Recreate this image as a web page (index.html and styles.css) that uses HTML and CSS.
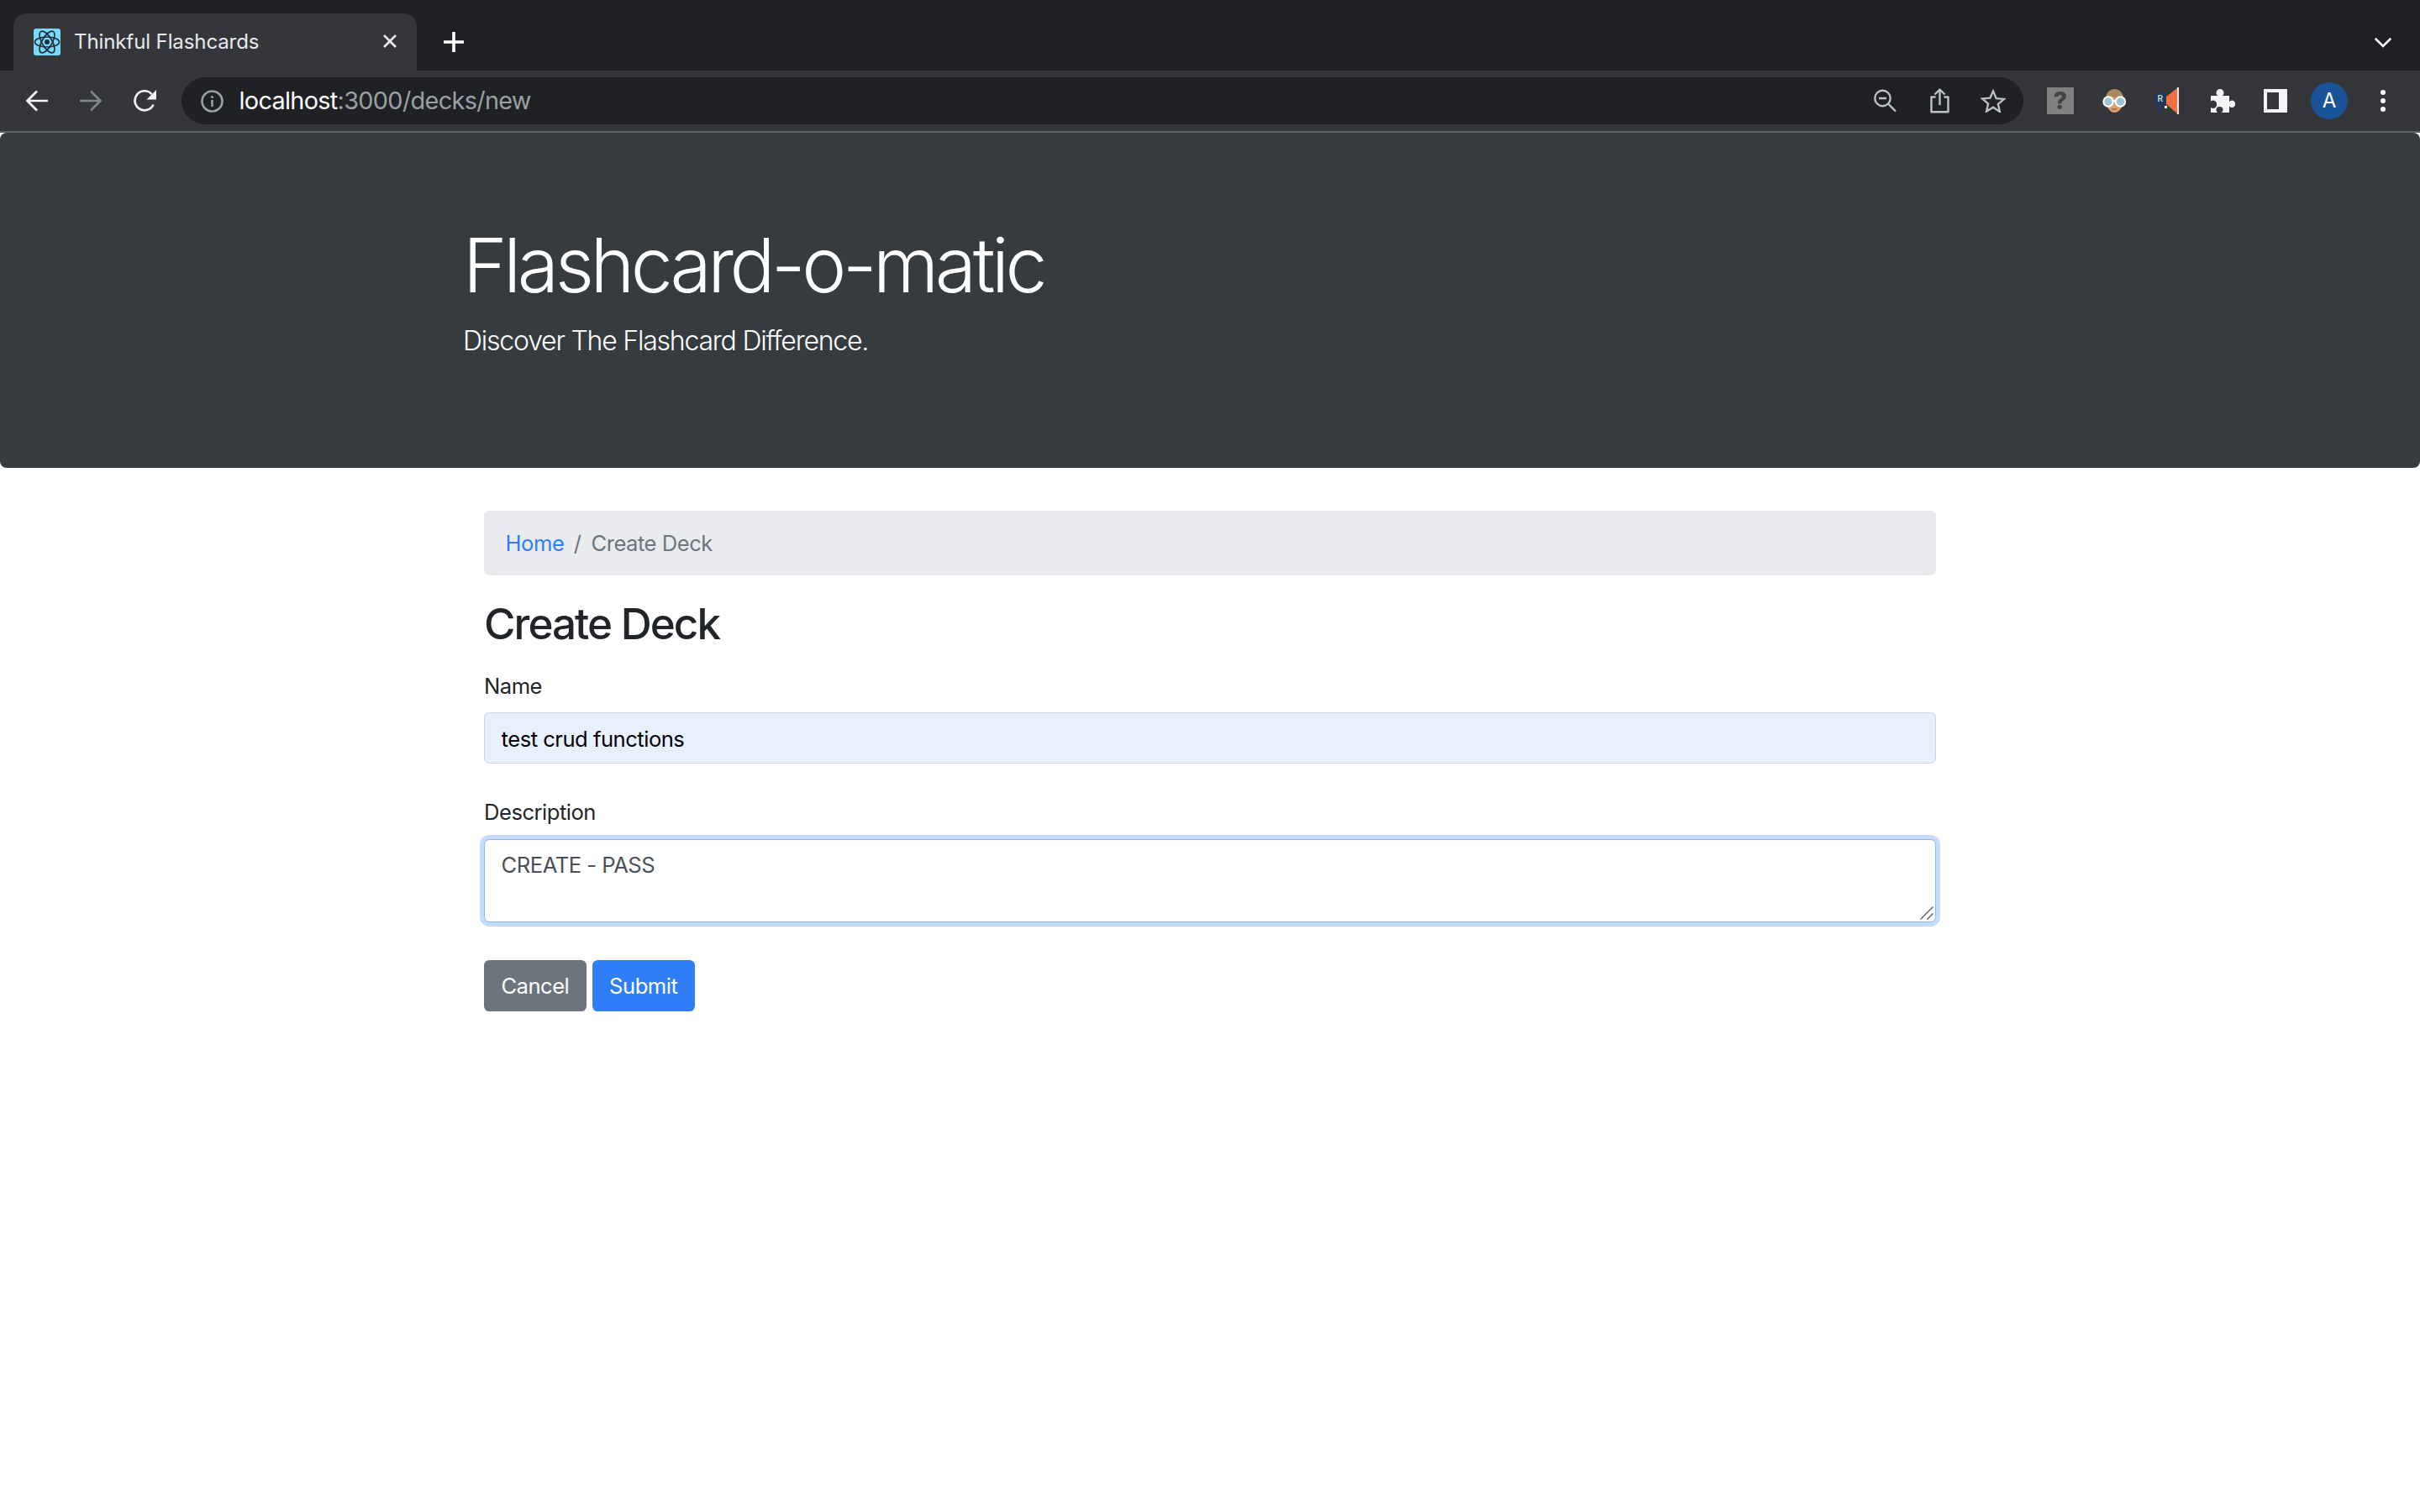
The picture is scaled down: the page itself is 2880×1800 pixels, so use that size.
FILE: index.html
```html
<!DOCTYPE html>
<html lang="en">
<head>
<meta charset="utf-8">
<title>Thinkful Flashcards</title>
<link rel="stylesheet" href="styles.css">
</head>
<body>
<header class="chrome">
  <div class="tabstrip">
    <div class="tab">
      <svg class="favicon" viewBox="0 0 32 32"><rect width="32" height="32" rx="3" fill="#7bd8fb"/><g fill="none" stroke="#20303a" stroke-width="1.7"><ellipse cx="16" cy="16" rx="14.5" ry="6"/><ellipse cx="16" cy="16" rx="14.5" ry="6" transform="rotate(60 16 16)"/><ellipse cx="16" cy="16" rx="14.5" ry="6" transform="rotate(120 16 16)"/></g><circle cx="16" cy="16" r="3" fill="#20303a"/></svg>
      <span class="tab-title">Thinkful Flashcards</span>
      <svg class="tab-close" viewBox="0 0 18 16"><path d="M2 1l14 14M16 1L2 15" stroke="#e8eaed" stroke-width="2.6" fill="none"/></svg>
    </div>
    <svg class="new-tab" viewBox="0 0 24 24"><path d="M12 0v24M0 12h24" stroke="#fff" stroke-width="3.6" stroke-linecap="round" fill="none"/></svg>
    <svg class="tab-menu" viewBox="0 0 20 12"><path d="M1.5 1.5L10 10l8.500-8.500" stroke="#fff" stroke-width="2.600" fill="none" stroke-linecap="round"/></svg>
  </div>
  <div class="toolbar">
    <svg class="nav-icon" viewBox="0 0 26 26"><path d="M26 13H2M13 1.500L1.500 13 13 24.500" stroke="#f1f3f4" stroke-width="2.700" fill="none"/></svg>
    <svg class="nav-icon dim" viewBox="0 0 26 26"><path d="M0 13h24M13 1.500L24.500 13 13 24.500" stroke="#80868b" stroke-width="2.700" fill="none"/></svg>
    <svg class="nav-icon" viewBox="0 0 27 27"><path d="M23.500 17.500A11.500 11.500 0 1 1 21.500 5" stroke="#f1f3f4" stroke-width="2.700" fill="none"/><path d="M27 0v11.500H15.500z" fill="#f1f3f4"/></svg>
    <div class="omnibox">
      <svg class="info" viewBox="0 0 27 27"><circle cx="13.500" cy="13.500" r="12" stroke="#9aa0a6" stroke-width="2.600" fill="none"/><path d="M13.500 12v8" stroke="#9aa0a6" stroke-width="2.600"/><circle cx="13.500" cy="8.500" r="1.600" fill="#9aa0a6"/></svg>
      <span class="url"><span class="url-host">localhost</span>:3000/decks/new</span>
      <div class="omni-actions">
        <svg class="omni-icon" viewBox="0 0 27 27"><circle cx="10.500" cy="10.500" r="9.200" stroke="#bdc1c6" stroke-width="2.400" fill="none"/><path d="M6 10.500h9M17 17l9 9" stroke="#bdc1c6" stroke-width="2.400" fill="none"/></svg>
        <svg class="omni-icon share" viewBox="0 0 27 30"><path d="M8.500 10.500H3.500v17.800h20V10.500h-5M13.500 20V2M7.500 7.500l6-6 6 6" stroke="#bdc1c6" stroke-width="2.400" fill="none" stroke-linejoin="round"/></svg>
        <svg class="omni-icon star" viewBox="0 0 30 29"><path d="M15 2.500l3.800 9 9.700.800-7.400 6.300 2.200 9.500L15 22.500l-8.300 5.100 2.200-9.500-7.400-6.300 9.700-.8z" stroke="#bdc1c6" stroke-width="2.400" fill="none"/></svg>
      </div>
    </div>
    <div class="ext-icons">
      <div class="ext-help"><span class="ext-help-mark">?</span></div>
      <svg class="ext" viewBox="0 0 30 30"><path d="M5 13C5 5 10 1 15.500 1S26 5 26 13v4H5z" fill="#a88a62"/><path d="M6 14c2-2 4-3 6-5 3 3 8 4 13 4v5c0 6-5 11-9.500 11S6 24 6 18z" fill="#d9a273"/><circle cx="8" cy="16" r="5.700" fill="#9cc3cf" stroke="#fff" stroke-width="2"/><circle cx="22.500" cy="16" r="5.700" fill="#9cc3cf" stroke="#fff" stroke-width="2"/><path d="M13 15h4" stroke="#fff" stroke-width="2"/><path d="M12 25h6" stroke="#a8623f" stroke-width="1.500"/></svg>
      <svg class="ext megaphone" viewBox="0 0 30 32"><path d="M0 12c0-4 3-6 6-6h8v15H9l-1 9H5l-.5-9C2 20 0 17 0 13z" fill="#1f3a5c"/><path d="M14 11l13-10v30L14 20z" fill="#f27141"/><path d="M28 0v32" stroke="#e8eef2" stroke-width="2"/><path d="M12 22h3v3h-3z" fill="#fff"/><text x="3.500" y="17" class="ext-r">R</text></svg>
      <svg class="ext puzzle" viewBox="0 0 30 28"><path d="M1 8h8c-1-1-1.500-2-1.500-3.500a4.500 4.500 0 0 1 9 0C16.500 6 16 7 15 8h8v7c1-1 2-1.500 3-1.500a4 4 0 0 1 0 8.500c-1 0-2-.5-3-1.500V28H14c1-1 1.500-2 1.500-3a4 4 0 0 0-8 0c0 1 .5 2 1.500 3H1v-6c1 .5 2 1 3 1a4.800 4.800 0 0 0 0-9.500c-1 0-2 .5-3 1z" fill="#f1f3f4"/></svg>
      <svg class="ext panel" viewBox="0 0 28 28"><path d="M0 0h28v28H0z" fill="#f1f3f4"/><path d="M4 4h14v20H4z" fill="#35363a"/></svg>
      <div class="avatar">A</div>
      <svg class="kebab" viewBox="0 0 8 28"><circle cx="4" cy="4" r="3" fill="#f1f3f4"/><circle cx="4" cy="14" r="3" fill="#f1f3f4"/><circle cx="4" cy="24" r="3" fill="#f1f3f4"/></svg>
    </div>
  </div>
</header>
<div class="page">
  <section class="hero">
    <div class="container">
      <h1 class="hero-title">Flashcard-o-matic</h1>
      <p class="hero-lead">Discover The Flashcard Difference.</p>
    </div>
  </section>
  <main class="container">
    <div class="inner">
      <nav class="breadcrumb"><a class="crumb-link" href="#">Home</a><span class="crumb-sep">/</span><span class="crumb-current">Create Deck</span></nav>
      <h2 class="page-title">Create Deck</h2>
      <form class="deck-form">
        <div class="field">
          <label class="field-label" for="name">Name</label>
          <input class="control control-filled" id="name" type="text" value="test crud functions">
        </div>
        <div class="field">
          <label class="field-label" for="description">Description</label>
          <div class="area-wrap">
            <textarea class="control control-area" id="description">CREATE - PASS</textarea>
            <svg class="grip" viewBox="0 0 16 16"><path d="M0.500 15.500L15.500 0.500M8.500 15.500L15.500 8.500" stroke="#666" stroke-width="1.500" fill="none"/></svg>
          </div>
        </div>
        <div class="actions">
          <button class="btn btn-cancel" type="button">Cancel</button>
          <button class="btn btn-submit" type="submit">Submit</button>
        </div>
      </form>
    </div>
  </main>
</div>
</body>
</html>
```
FILE: styles.css
```css
* { box-sizing: border-box; }
html, body { margin: 0; padding: 0; }
body { width: 2880px; height: 1800px; overflow: hidden; background: #fff; font-family: Inter, "Liberation Sans", sans-serif; font-size: 25.6px; line-height: 1.5; color: #212529; letter-spacing: -0.5px; }

.chrome { display: flex; flex-direction: column; letter-spacing: normal; }
.tabstrip { height: 84px; background: #202124; display: flex; align-items: flex-end; padding-left: 16px; position: relative; }
.tab { width: 480px; height: 68px; background: #35363a; border-radius: 16px 16px 0 0; display: flex; align-items: center; padding: 0 23px 0 24px; }
.favicon { width: 32px; height: 32px; flex: none; margin-top: -1px; }
.tab-title { margin-left: 16px; flex: 1; font-size: 24px; line-height: 32px; color: #e8eaed; letter-spacing: -0.1px; }
.tab-close { width: 18px; height: 16px; margin-top: -2px; }
.new-tab { width: 24px; height: 24px; margin: 0 0 22px 32px; }
.tab-menu { width: 20px; height: 12px; margin: 0 0 27px 2274px; }

.toolbar { height: 74px; background: #35363a; border-bottom: 2px solid #5f6064; display: flex; align-items: center; padding: 0 0 0 31px; }
.nav-icon { width: 26px; height: 26px; margin-right: 38px; flex: none; }
.nav-icon:nth-of-type(3) { width: 27px; height: 27px; margin-right: 30px; }
.omnibox { width: 2192px; height: 56px; background: #202124; border-radius: 28px; display: flex; align-items: center; padding-left: 23px; flex: none; }
.info { width: 27px; height: 27px; flex: none; }
.url { margin-left: 18.5px; font-size: 28.8px; line-height: 40px; color: #9aa0a6; letter-spacing: -0.66px; }
.url-host { color: #fff; }
.omni-actions { margin-left: auto; display: flex; align-items: center; padding-right: 21px; }
.omni-icon { width: 27px; height: 28px; flex: none; }
.share { height: 30px; margin: 0 35px 0 38px; }
.star { width: 30px; }
.ext-icons { display: flex; align-items: center; margin-left: 28px; }
.ext { width: 30px; height: 32px; margin-right: 33px; flex: none; }
.megaphone { margin-right: 36px; }
.ext-help { width: 32px; height: 32px; background: #808080; margin-right: 33px; display: flex; align-items: center; justify-content: center; }
.ext-help-mark { font-size: 29px; line-height: 32px; font-weight: 800; color: #454545; filter: blur(.6px); }
.ext-r { font-size: 10px; font-weight: 600; fill: #c9d3de; }
.puzzle { height: 28px; margin-right: 34px; }
.panel { width: 28px; height: 28px; margin-right: 28px; }
.avatar { width: 44px; height: 44px; border-radius: 50%; background: #1a5398; color: #fff; font-size: 24px; line-height: 44px; text-align: center; margin-right: 38px; }
.kebab { width: 8px; height: 28px; }

.page { background: #fff; }
.hero { background: #363b3f; border-radius: 8px; padding: 102.4px 0; margin-bottom: 51.2px; color: #fff; }
.container { width: 1824px; margin: 0 auto; padding: 0 24px; }
main.container { width: 1776px; }
.hero-title { margin: 0 0 12.4px -1px; padding-top: 2px; font-size: 89.6px; font-weight: 300; line-height: 1.2; letter-spacing: -4.4px; }
.hero-lead { margin: 0 0 24px -1px; font-size: 32px; font-weight: 300; line-height: 1.5; letter-spacing: -1.22px; }

.breadcrumb { height: 76.8px; background: #eaebef; border-radius: 6.4px; padding: 20px 25.6px 18.4px; margin-bottom: 25.6px; display: flex; }
.crumb-link { color: #2f7ef7; text-decoration: none; }
.crumb-sep { color: #6c757d; padding: 0 12px 0 11.5px; }
.crumb-current { color: #6c757d; }
.page-title { margin: 0 0 24px; padding-top: 1.6px; font-size: 51.2px; font-weight: 500; line-height: 1.2; letter-spacing: -1.98px; }
.field { margin-bottom: 38.4px; }
.field-label { display: block; padding-top: 0.8px; margin-bottom: 12px; }
.control { display: block; width: 100%; font: inherit; letter-spacing: inherit; color: #495057; background: #fff; border: 1.6px solid #ced4da; border-radius: 6.4px; outline: 0; }
.control-filled { height: 60.8px; padding: 10.4px 19.6px 8.8px; background: #e8f0fe; color: #000; }
.control-area { height: 99px; padding: 10.8px 19.6px 8px; border-color: #86b7fe; box-shadow: 0 0 0 5.12px #c7dbfb; resize: none; }
.area-wrap { position: relative; }
.grip { position: absolute; right: 3.5px; bottom: 2.5px; width: 16px; height: 16px; }
.actions { display: flex; gap: 7px; margin-top: 45px; }
.btn { height: 60.8px; padding: 10.4px 19.4px 8.8px; font: inherit; letter-spacing: inherit; color: #fff; border: 1.6px solid transparent; border-radius: 6.4px; }
.btn-cancel { background: #6c757d; }
.btn-submit { background: #307ef7; }
```
